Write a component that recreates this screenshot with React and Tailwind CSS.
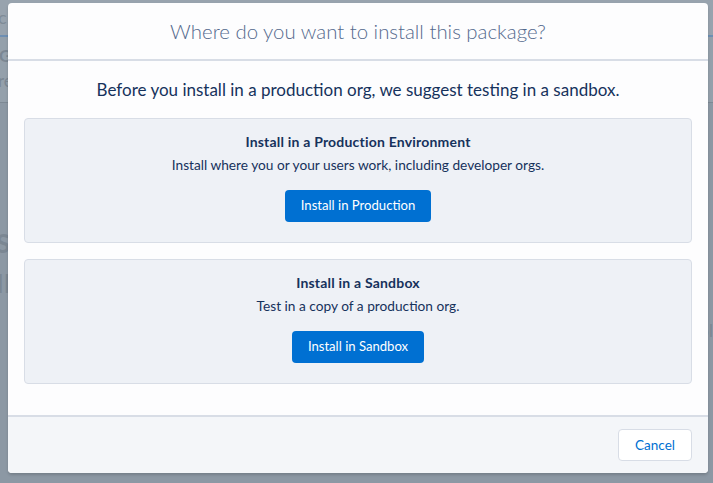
export default function App() {
  const options = [
    {
      title: "Install in a Production Environment",
      text: "Install where you or your users work, including developer orgs.",
      action: "Install in Production",
    },
    {
      title: "Install in a Sandbox",
      text: "Test in a copy of a production org.",
      action: "Install in Sandbox",
    },
  ];

  return (
    <div
      className="relative h-[483px] w-[713px] overflow-hidden bg-[#8c98a4]"
      style={{ fontFamily: "Lato, 'Open Sans', sans-serif" }}
    >
      {/* page behind the modal, dimmed */}
      <div className="flex h-[37px] items-center border-b-2 border-[#6e8fb3] bg-[#98a3ae] text-[18px] text-[#7f8b97]">
        <span className="-ml-[2px]">c</span>
      </div>
      <div className="h-[66px] border-b border-[#7d8994] bg-[#94a0ab] text-[17px] leading-[25px] text-[#7b8793]">
        <div className="-ml-[1px] pt-[6px] font-bold">GL</div>
        <div className="-ml-[2px]">re</div>
      </div>
      <div className="flex justify-between">
        <div className="-ml-[4px] pt-[120px] text-[26px] leading-[40px] font-bold text-[#7b8793]">
          <div>SS</div>
          <div>III</div>
        </div>
        <div className="pt-[215px] text-[17px] leading-[25px] text-[#7b8793]">
          <div>ol</div>
          <div>t</div>
          <div>l</div>
        </div>
      </div>

      {/* modal */}
      <div className="absolute inset-0 pl-[8px] pt-[3px]">
        <div className="flex h-[470px] w-[700px] flex-col overflow-hidden rounded bg-[#fdfdfe] shadow-[0_2px_3px_rgba(0,0,0,0.16)]">
          <div className="flex h-[58px] shrink-0 items-center justify-center border-b-2 border-[#d8dde6]">
            <h2 className="text-[20.4px] font-light text-[#54698d]">
              Where do you want to install this package?
            </h2>
          </div>

          <div className="flex-1 px-4 pt-[17px]">
            <p className="text-center text-[17px] leading-[24px] text-[#16325c]">
              Before you install in a production org, we suggest testing in a sandbox.
            </p>
            <div className="mt-[16px] flex flex-col gap-4">
              {options.map((o) => (
                <div
                  key={o.action}
                  className="flex h-[125px] flex-col items-center rounded border border-[#d8dde6] bg-[#eef1f6] pt-[12px]"
                >
                  <h3 className="text-[14px] leading-[21px] font-bold tracking-[0.2px] text-[#16325c]">
                    {o.title}
                  </h3>
                  <p className="mt-[3px] text-[13.7px] leading-[20px] text-[#16325c]">{o.text}</p>
                  <button className="mt-[15px] h-[32px] rounded bg-[#0070d2] px-4 text-[13.1px] text-white">
                    {o.action}
                  </button>
                </div>
              ))}
            </div>
          </div>

          <div className="flex h-[58px] shrink-0 items-center justify-end border-t-2 border-[#d8dde6] bg-[#f4f6f9] px-4">
            <button className="h-[32px] rounded border border-[#d8dde6] bg-white px-4 text-[13.5px] text-[#0070d2]">
              Cancel
            </button>
          </div>
        </div>
      </div>
    </div>
  );
}
